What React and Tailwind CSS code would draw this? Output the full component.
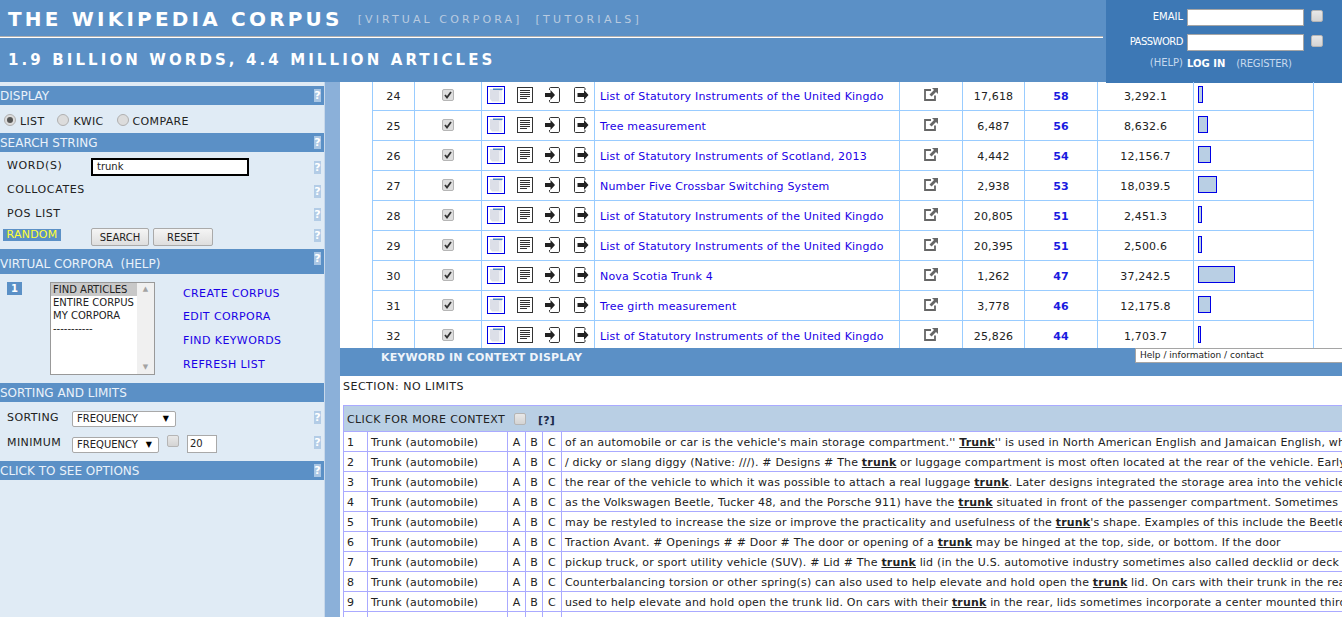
import React from 'react';

const rows = [
  [24, 'List of Statutory Instruments of the United Kingdo', '17,618', 58, '3,292.1', 5],
  [25, 'Tree measurement', '6,487', 56, '8,632.6', 10],
  [26, 'List of Statutory Instruments of Scotland, 2013', '4,442', 54, '12,156.7', 13],
  [27, 'Number Five Crossbar Switching System', '2,938', 53, '18,039.5', 19],
  [28, 'List of Statutory Instruments of the United Kingdo', '20,805', 51, '2,451.3', 4],
  [29, 'List of Statutory Instruments of the United Kingdo', '20,395', 51, '2,500.6', 4],
  [30, 'Nova Scotia Trunk 4', '1,262', 47, '37,242.5', 37],
  [31, 'Tree girth measurement', '3,778', 46, '12,175.8', 13],
  [32, 'List of Statutory Instruments of the United Kingdo', '25,826', 44, '1,703.7', 3],
];

const kwic = [
  ["of an automobile or car is the vehicle's main storage compartment.'' ", 'Trunk', "'' is used in North American English and Jamaican English, which"],
  ['/ dicky or slang diggy (Native: ///). # Designs # The ', 'trunk', ' or luggage compartment is most often located at the rear of the vehicle. Early'],
  ['the rear of the vehicle to which it was possible to attach a real luggage ', 'trunk', '. Later designs integrated the storage area into the vehicle'],
  ['as the Volkswagen Beetle, Tucker 48, and the Porsche 911) have the ', 'trunk', ' situated in front of the passenger compartment. Sometimes'],
  ['may be restyled to increase the size or improve the practicality and usefulness of the ', 'trunk', "'s shape. Examples of this include the Beetle"],
  ['Traction Avant. # Openings # # Door # The door or opening of a ', 'trunk', ' may be hinged at the top, side, or bottom. If the door'],
  ['pickup truck, or sport utility vehicle (SUV). # Lid # The ', 'trunk', ' lid (in the U.S. automotive industry sometimes also called decklid or deck'],
  ['Counterbalancing torsion or other spring(s) can also used to help elevate and hold open the ', 'trunk', ' lid. On cars with their trunk in the rear'],
  ['used to help elevate and hold open the trunk lid. On cars with their ', 'trunk', ' in the rear, lids sometimes incorporate a center mounted third'],
];

const Help = ({ dark, className = '' }) => (
  <span className={`flex h-[13px] w-[7px] items-center justify-center text-[11px] font-bold leading-none tracking-normal text-white ${dark ? 'bg-[#a9c6e4]' : 'bg-[#b3cce6]'} ${className}`}>?</span>
);

const Check = ({ className = '' }) => (
  <span className={`block h-[12px] w-[12px] rounded-[2px] border border-[#b5b5b5] bg-gradient-to-b from-[#e8e8e8] to-[#d4d4d4] ${className}`} />
);

const Radio = ({ on }) => (
  <span className="flex h-[12px] w-[12px] items-center justify-center rounded-full border border-[#b0b0b0] bg-[#dcdcdc]">
    {on && <span className="h-[6px] w-[6px] rounded-full bg-[#555]" />}
  </span>
);

const Bar = ({ title, h = 'h-[19px]', children }) => (
  <div className={`flex ${h} items-center justify-between bg-[#5b90c6] pr-[3px] text-[12px] font-medium leading-none text-[#eaf2fa]`}>
    <span className="whitespace-pre pt-[1px]">{title}</span>
    {children || <Help dark />}
  </div>
);

const Select = ({ width, className = '' }) => (
  <div className={`flex h-[16px] ${width} items-center justify-between rounded-[2px] border border-[#a9a9a9] bg-white pl-[4px] pr-[6px] text-[10px] tracking-normal text-[#222] ${className}`}>
    FREQUENCY
    <span className="text-[8px] leading-none text-black">▼</span>
  </div>
);

const PageIcon = () => (
  <svg width="18" height="18" viewBox="0 0 18 18" className="block">
    <rect x="0.5" y="0.5" width="17" height="17" fill="#fff" stroke="#0000e6" />
    <path d="M3 3h12v12.500H5L3 13z" fill="#dcdfe8" />
    <path d="M6 2.500h9.500v1.500H6z" fill="#4f86c0" />
    <path d="M12 5h3v10h-3z" fill="#eef0f5" />
  </svg>
);

const LinesIcon = () => (
  <svg width="16" height="16" viewBox="0 0 16 16" className="block">
    <rect x="0.5" y="0.5" width="15" height="15" fill="#fff" stroke="#333" />
    <path d="M3 3.500h10M3 5.500h10M3 7.500h10M3 9.500h10M3 11.500h7" stroke="#333" />
  </svg>
);

const InIcon = () => (
  <svg width="15" height="16" viewBox="0 0 15 16" className="block">
    <path d="M4.500 3V1.500C4.500 1 5 .5 5.500 .5h7.500c.5 0 1.500.5 1.500 1v13c0 .5-1 1-1.500 1H5.500c-.5 0-1-.5-1-1V13" fill="none" stroke="#333" />
    <path d="M0 6h5.500V3l4.500 5-4.500 5v-3H0z" fill="#222" />
  </svg>
);

const OutIcon = () => (
  <svg width="15" height="16" viewBox="0 0 15 16" className="block">
    <path d="M11 3V1.500C11 1 10.500.5 10 .5H1.500C1 .5.500 1 .5 1.500v13c0 .5.500 1 1 1H10c.5 0 1-.5 1-1V13" fill="none" stroke="#333" />
    <path d="M3.500 6H10V3l4.500 5L10 13v-3H3.500z" fill="#222" />
  </svg>
);

const LinkIcon = () => (
  <svg width="14" height="13" viewBox="0 0 14 13" className="block">
    <path d="M7 2H1v10h10V7.500" fill="none" stroke="#666" strokeWidth="1.800" />
    <path d="M8 0h6v6l-2-2-4.500 4.500-2-2L10 2z" fill="#666" />
  </svg>
);

const TinyCheck = () => (
  <span className="mx-auto flex h-[12px] w-[12px] items-center justify-center rounded-[2px] border border-[#b5b5b5] bg-[#dedede]">
    <svg width="8" height="8" viewBox="0 0 8 8" className="block">
      <path d="M1 4l2 2.500L7 1" fill="none" stroke="#333" strokeWidth="1.800" />
    </svg>
  </span>
);

const HitRow = ({ row }) => (
  <tr className="h-[30px]">
    <td className="border border-[#99ccff] pt-[2px] text-center">{row[0]}</td>
    <td className="border border-[#99ccff] pb-[2px]"><TinyCheck /></td>
    <td className="border border-[#99ccff] pb-[2px]">
      <div className="flex items-center pl-[5px]">
        <PageIcon />
        <span className="ml-[12px]"><LinesIcon /></span>
        <span className="ml-[12px]"><InIcon /></span>
        <span className="ml-[14px]"><OutIcon /></span>
      </div>
    </td>
    <td className="overflow-hidden whitespace-nowrap border border-[#99ccff] pl-[5px] pt-[2px] text-[#1a00e6]">{row[1]}</td>
    <td className="border border-[#99ccff] pb-[2px]"><div className="flex justify-center pr-[1px]"><LinkIcon /></div></td>
    <td className="border border-[#99ccff] pt-[2px] text-center">{row[2]}</td>
    <td className="border border-[#99ccff] pt-[2px] text-center font-bold text-[#1a1ae0]">{row[3]}</td>
    <td className="border border-[#99ccff] pt-[2px] text-center">{row[4]}</td>
    <td className="border border-[#99ccff] pb-[2px] pl-[4px]">
      <div className="h-[17px] border border-[#0000e6] bg-[#b9cfe4]" style={{ width: row[5] }} />
    </td>
  </tr>
);

const KwicRow = ({ row, i }) => (
  <tr className="h-[20px]">
    <td className="border border-[#aaaaff] pl-[3px] pt-[2px]">{i + 1}</td>
    <td className="border border-[#aaaaff] pl-[3px] pt-[2px]">Trunk (automobile)</td>
    <td className="border border-[#aaaaff] pt-[2px] text-center">A</td>
    <td className="border border-[#aaaaff] pt-[2px] text-center">B</td>
    <td className="border border-[#aaaaff] pt-[2px] text-center">C</td>
    <td className="overflow-hidden whitespace-pre border border-[#aaaaff] pl-[3px] pt-[2px]">
      {row[0]}<b className="underline">{row[1]}</b>{row[2]}
    </td>
  </tr>
);

export default function App() {
  return (
    <div className="flex h-screen w-full flex-col overflow-hidden bg-white font-['DejaVu_Sans','Liberation_Sans',sans-serif] text-[11px] text-[#222]">
      {/* Top banner */}
      <header className="flex h-[82px] shrink-0 bg-[#5b90c6]">
        <div className="w-[1106px] shrink-0">
          <div className="flex h-[38px] w-[1103px] items-center border-b border-b-white pl-[8px] pt-[1px] shadow-[inset_0_-1px_0_#b0b0b0]">
            <span className="text-[20px] font-bold tracking-[3.2px] text-white">THE WIKIPEDIA CORPUS</span>
            <span className="ml-[15px] mt-[2px] text-[11px] tracking-[3.1px] text-[#b9cbe0]">[VIRTUAL CORPORA]</span>
            <span className="ml-[13px] mt-[2px] text-[11px] tracking-[3.3px] text-[#b9cbe0]">[TUTORIALS]</span>
          </div>
          <div className="pl-[8px] pt-[11px] text-[15px] font-bold tracking-[3.1px] text-white">1.9 BILLION WORDS, 4.4 MILLION ARTICLES</div>
        </div>
        <div className="h-[83px] flex-1 bg-[#3d78b5] pt-[9px] text-[10px] text-white">
          <div className="flex h-[17px] items-center">
            <span className="mb-[2px] w-[77px] text-right">EMAIL</span>
            <span className="ml-[4px] h-[17px] w-[117px] border border-[#a5a5a5] bg-white" />
            <Check className="mb-[4px] ml-[7px]" />
          </div>
          <div className="mt-[8px] flex h-[17px] items-center">
            <span className="mb-[2px] w-[77px] text-right tracking-[-0.5px]">PASSWORD</span>
            <span className="ml-[4px] h-[17px] w-[117px] border border-[#a5a5a5] bg-white" />
            <Check className="mb-[4px] ml-[7px]" />
          </div>
          <div className="mt-[4px] flex h-[16px] items-center text-[#c6d9ee]">
            <span className="mb-[2px] w-[77px] text-right">(HELP)</span>
            <span className="ml-[4px] font-bold text-white">LOG IN</span>
            <span className="ml-[11px] tracking-[-0.2px]">(REGISTER)</span>
          </div>
        </div>
      </header>

      <div className="flex min-h-0 flex-1">
        {/* Left controls */}
        <aside className="w-[325px] shrink-0 border-r border-r-[#c8d8ea] bg-[#e0ebf5] pt-[4px] text-[#222]">
          <Bar title="DISPLAY" />
          <div className="flex h-[28px] items-start pl-[4px] pt-[9px] leading-[16px] tracking-[0.35px]">
            <Radio on /><span className="ml-[4px]">LIST</span>
            <span className="ml-[13px]"><Radio /></span><span className="ml-[4px]">KWIC</span>
            <span className="ml-[13px]"><Radio /></span><span className="ml-[4px]">COMPARE</span>
          </div>
          <Bar title="SEARCH STRING" />
          <div className="flex h-[24px] items-start justify-between pl-[7px] pr-[3px] leading-[16px] tracking-[0.6px]">
            <span className="mt-[6px] w-[84px]">WORD(S)</span>
            <span className="mt-[6px] flex h-[18px] w-[158px] items-center border-2 border-black bg-white pl-[4px] text-[10px] tracking-normal text-[#222]">trunk</span>
            <span className="flex-1" /><Help className="mt-[9px]" />
          </div>
          <div className="flex h-[24px] items-start justify-between pl-[7px] pr-[3px] leading-[16px] tracking-[0.6px]"><span className="mt-[6px]">COLLOCATES</span><Help className="mt-[9px]" /></div>
          <div className="flex h-[24px] items-start justify-between pl-[7px] pr-[3px] leading-[16px] tracking-[0.6px]"><span className="mt-[6px]">POS LIST</span><Help className="mt-[8px]" /></div>
          <div className="flex h-[25px] items-start pl-[3px] pr-[3px]">
            <span className="mt-[5px] flex h-[12px] w-[58px] items-center justify-center bg-[#5b90c6] tracking-[0.2px] text-[#ffff33]">RANDOM</span>
            <span className="ml-[30px] mt-[4px] flex h-[18px] w-[58px] items-center justify-center rounded-[2px] border border-[#aaa] bg-gradient-to-b from-[#f5f5f5] to-[#dedede] text-[10px]">SEARCH</span>
            <span className="ml-[4px] mt-[4px] flex h-[18px] w-[60px] items-center justify-center rounded-[2px] border border-[#aaa] bg-gradient-to-b from-[#f5f5f5] to-[#dedede] text-[10px]">RESET</span>
            <span className="flex-1" /><Help className="mt-[5px]" />
          </div>
          <div className="flex h-[25px] items-start justify-between bg-[#5b90c6] pr-[3px] text-[12px] leading-none text-[#eaf2fa]">
            <span className="whitespace-pre pt-[9px]">VIRTUAL CORPORA  (HELP)</span>
            <Help dark className="mt-[3px]" />
          </div>
          <div className="flex h-[109px] pl-[7px] pt-[8px]">
            <span className="flex h-[13px] w-[15px] items-center justify-center bg-[#5b90c6] text-[10px] font-bold text-white">1</span>
            <div className="ml-[28px] flex h-[93px] w-[105px] border border-[#999] bg-white text-[10px] leading-[13px]">
              <div className="flex-1">
                <div className="bg-[#c8c8c8] pl-[2px]">FIND ARTICLES</div>
                <div className="pl-[2px]">ENTIRE CORPUS</div>
                <div className="pl-[2px]">MY CORPORA</div>
                <div className="pl-[2px]">-----------</div>
              </div>
              <div className="flex w-[17px] flex-col items-center justify-between bg-[#f0f0f0] py-[3px] text-[7px] leading-none text-[#a3a3a3]">
                <span>▲</span><span>▼</span>
              </div>
            </div>
            <div className="ml-[28px] flex flex-col pt-[4px] tracking-[0.4px] text-[#1a00e6]">
              <span className="h-[23px]">CREATE CORPUS</span>
              <span className="h-[24px]">EDIT CORPORA</span>
              <span className="h-[24px]">FIND KEYWORDS</span>
              <span>REFRESH LIST</span>
            </div>
          </div>
          <Bar title="SORTING AND LIMITS"><span /></Bar>
          <div className="flex h-[29px] items-start pl-[7px] pr-[3px] leading-[16px] tracking-[0.4px]">
            <span className="mt-[8px] w-[65px]">SORTING</span>
            <Select width="w-[104px]" className="mt-[9px]" />
            <span className="flex-1" /><Help className="mt-[9px]" />
          </div>
          <div className="flex h-[30px] items-start pl-[7px] pr-[3px] leading-[16px] tracking-[0.4px]">
            <span className="mt-[4px] w-[65px]">MINIMUM</span>
            <Select width="w-[87px]" className="mt-[6px]" />
            <Check className="ml-[8px] mt-[4px]" />
            <span className="ml-[8px] mt-[4px] flex h-[18px] w-[30px] items-center border border-[#a9a9a9] bg-white pl-[2px] text-[10px] tracking-normal">20</span>
            <span className="flex-1" /><Help className="mt-[5px]" />
          </div>
          <Bar title="CLICK TO SEE OPTIONS" />
        </aside>

        {/* Splitter between the frames */}
        <div className="w-[15px] shrink-0 bg-[#8bb0d9]" />

        {/* Results */}
        <main className="relative min-w-0 flex-1 overflow-hidden">
          <div className="h-[266px] overflow-hidden pl-[32px] leading-[13px] tracking-[0.18px]">
            <table className="-mt-[2px] w-[942px] table-fixed border-collapse">
              <colgroup>
                <col className="w-[42px]" /><col className="w-[67px]" /><col className="w-[113px]" /><col className="w-[305px]" />
                <col className="w-[63px]" /><col className="w-[62px]" /><col className="w-[73px]" /><col className="w-[96px]" /><col />
              </colgroup>
              <tbody>
                {rows.map((row) => <HitRow key={row[0]} row={row} />)}
              </tbody>
            </table>
          </div>
          <div className="h-[28px] bg-[#5b90c6] pl-[41px] pt-[2px] font-bold tracking-[0.15px] text-[#eef4fa]">KEYWORD IN CONTEXT DISPLAY</div>
          <div className="pl-[3px] pt-[3px] leading-[16px] tracking-[0.5px]">SECTION: NO LIMITS</div>
          <div className="w-[1100px] pl-[3px] pt-[10px] leading-[13px] tracking-[0.18px]">
            <table className="w-full table-fixed border-collapse">
              <colgroup>
                <col className="w-[24px]" /><col className="w-[140px]" /><col className="w-[18px]" /><col className="w-[17px]" /><col className="w-[19px]" /><col />
              </colgroup>
              <tbody>
                <tr className="h-[26px] bg-[#b9cfe4]">
                  <td colSpan={6} className="border border-[#aaaaff] pl-[3px]">
                    <div className="flex items-center">
                      <span className="mt-[2px] tracking-[0.36px]">CLICK FOR MORE CONTEXT</span>
                      <Check className="ml-[9px]" />
                      <b className="ml-[12px] mt-[4px] text-[#1a2a4a]">[?]</b>
                    </div>
                  </td>
                </tr>
                {kwic.map((row, i) => <KwicRow key={i} row={row} i={i} />)}
                <tr className="h-[20px]"><td className="border border-[#aaaaff]" /><td className="border border-[#aaaaff]" /><td className="border border-[#aaaaff]" /><td className="border border-[#aaaaff]" /><td className="border border-[#aaaaff]" /><td className="border border-[#aaaaff]" /></tr>
              </tbody>
            </table>
          </div>
          {/* Browser tooltip over the frame border */}
          <div className="absolute left-[795px] top-[266px] h-[15px] w-[300px] border border-[#a5a5a5] bg-white pl-[4px] text-[9px] leading-[13px] text-[#222]">Help / information / contact</div>
        </main>
      </div>
    </div>
  );
}
